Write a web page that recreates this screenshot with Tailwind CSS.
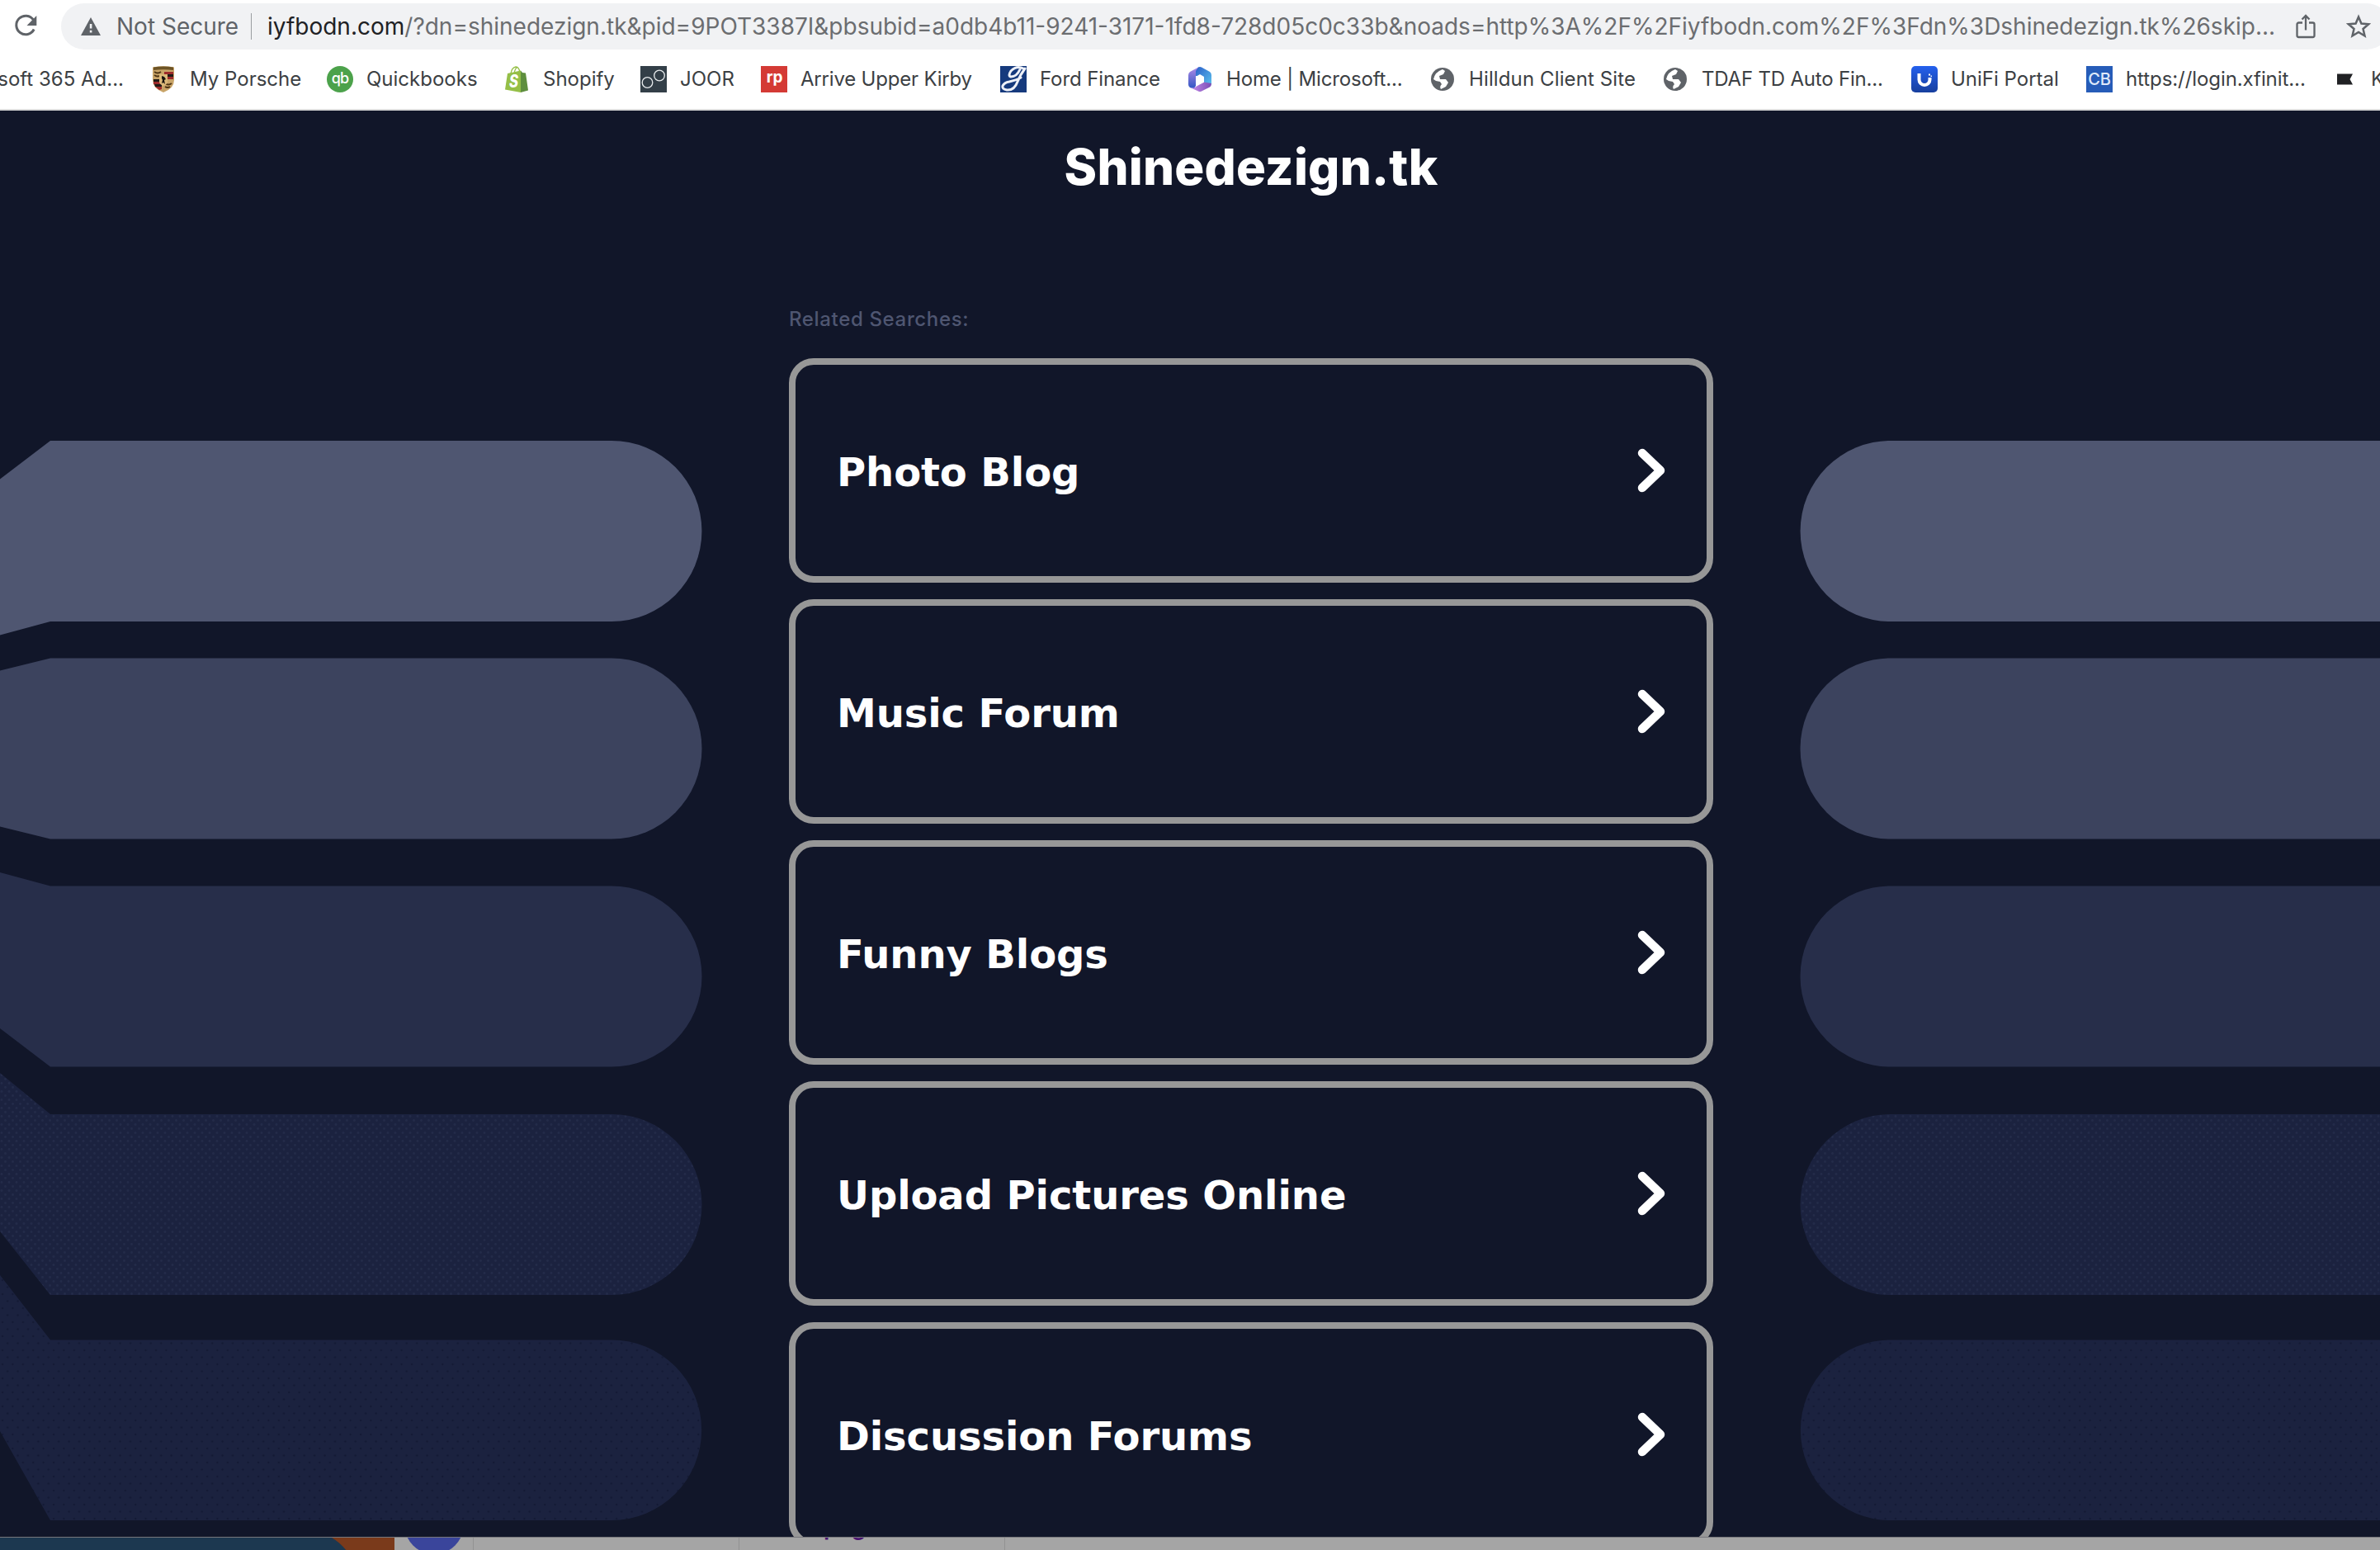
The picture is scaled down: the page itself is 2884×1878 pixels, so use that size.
<!DOCTYPE html>
<html lang="en">
<head>
    <meta charset="UTF-8">
    <meta name="viewport" content="width=device-width, initial-scale=1.0">
    <title>Shinedezign.tk</title>
    <script src="https://cdn.jsdelivr.net/npm/@tailwindcss/browser@4"></script>
</head>
<body class="w-[2884px] h-[1878px] overflow-hidden bg-white font-[Inter,sans-serif]">
    <!-- Address bar -->
    <header class="h-[134px] overflow-hidden border-b-2 border-[#dcdcdc] bg-white">
        <div class="flex items-center pt-1">
            <div class="w-[74px] shrink-0 pl-4">
                <svg class="w-[30px] h-[30px]" viewBox="0 0 30 30" fill="none">
                    <path d="M24.5 7.2A11.3 11.3 0 1 0 25.2 18.5" stroke="#5f6368" stroke-width="3" />
                    <path d="M28.3 2v12H16.5z" fill="#5f6368" />
                </svg>
            </div>
            <div class="flex items-center w-[2822px] h-14 shrink-0 rounded-full bg-[#f1f2f4] text-[28px] text-[#6b6d70] whitespace-nowrap">
                <svg class="ml-6 w-6 h-[22px] shrink-0" viewBox="0 0 24 22">
                    <path d="M12 0l12 22H0z" fill="#5f6368" />
                    <path d="M10.8 8h2.6v5.6h-2.6zM10.8 15.8h2.6v2.8h-2.6z" fill="#f1f2f4" />
                </svg>
                <span class="ml-[19px] w-[163px] text-[#5f6368]">Not Secure</span>
                <span class="w-px h-8 bg-[#9a9da1]"></span>
                <span class="ml-[19px] text-[#202124]">iyfbodn.com</span><span class="w-[2298px]">/?dn=shinedezign.tk&amp;pid=9POT3387I&amp;pbsubid=a0db4b11-9241-3171-1fd8-728d05c0c33b&amp;noads=http%3A%2F%2Fiyfbodn.com%2F%3Fdn%3Dshinedezign.tk%26skip...</span>
                <svg class="-ml-[6px] w-6 h-[30px] shrink-0" viewBox="0 0 24 30" fill="none" stroke="#5f6368" stroke-width="2.3">
                    <path d="M8 10.5H3.5A2 2 0 0 0 1.5 12.500v13.500a2 2 0 0 0 2 2h17a2 2 0 0 0 2-2V12.500a2 2 0 0 0-2-2H16M12 19.500V2.500M7.500 6.500L12 2l4.500 4.500" />
                </svg>
                <svg class="ml-[37px] w-[30px] h-[30px] shrink-0" viewBox="0 0 30 30" fill="none" stroke="#5f6368" stroke-width="2.5">
                    <path d="M15 3.500l3.400 8 8.700.8-6.600 5.700 2 8.500L15 22l-7.500 4.500 2-8.500-6.600-5.700 8.700-.8z" />
                </svg>
            </div>
        </div>

        <!-- Bookmarks -->
        <nav class="flex items-center h-[70px] mt-px text-2xl text-[#3c4043] whitespace-nowrap">
            <a class="flex w-[182px] shrink-0 justify-end pr-[32px]">soft 365 Ad...</a>
            <a class="flex items-center gap-4 w-[214px] shrink-0">
                <svg class="w-8 h-8 shrink-0" viewBox="0 0 32 32">
                    <path d="M3 1.500Q16-1 29 1.500V17q0 10-13 15Q3 27 3 17z" fill="#c9a468" />
                    <path d="M4 1.600Q16-.5 28 1.600V5Q16 3.500 4 5z" fill="#6d5426" />
                    <path d="M17 7h11v3H17zM17 13h11v3H17zM4 19h10v3H4zM6 25h8v3l-3 1z" fill="#9c2a2b" />
                    <path d="M17 10h11v3H17zM4 16h10v3H4zM5 22h9v3H6z" fill="#1f1a17" />
                    <path d="M5 7q4 3 8 0M5 11q4 3 8 0M18 21q4 3 8 0M18 25q3 2 6 0" stroke="#4d3414" stroke-width="2" fill="none" />
                    <path d="M11 10h10v9q0 3-5 5-5-2-5-5z" fill="#dcb97a" />
                    <path d="M14 12l3 1 2 3-2 1 1 5-2-2-2 1 1-4-1-2z" fill="#15110d" />
                </svg>
                My Porsche
            </a>
            <a class="flex items-center gap-4 w-[214px] shrink-0">
                <svg class="w-8 h-8 shrink-0" viewBox="0 0 32 32">
                    <circle cx="16" cy="16" r="16" fill="#4ca24b" />
                    <text x="16" y="20.500" text-anchor="middle" font-family="Inter" font-size="18" font-weight="500" letter-spacing="-1" fill="#fff">qb</text>
                </svg>
                Quickbooks
            </a>
            <a class="flex items-center gap-4 w-[166px] shrink-0">
                <svg class="w-8 h-8 shrink-0" viewBox="0 0 32 32">
                    <path d="M9 9Q10 2 15 1q4 0 5 7M13 9q1-6 4-8" stroke="#95bf47" stroke-width="1.300" fill="none" />
                    <path d="M5 9l16-3.500V32L2 28.500z" fill="#95bf47" />
                    <path d="M21 5.500l2 2.500 4 .5 3 21L21 32z" fill="#5e8e3e" />
                    <text x="7" y="25.500" font-family="Inter" font-size="21" font-weight="800" font-style="italic" textLength="11" lengthAdjust="spacingAndGlyphs" fill="#fff">S</text>
                </svg>
                Shopify
            </a>
            <a class="flex items-center gap-4 w-[146px] shrink-0">
                <svg class="w-8 h-8 shrink-0" viewBox="0 0 32 32" fill="none" stroke="#e8ecee" stroke-width="1.300">
                    <path d="M0 0h32v32H0z" fill="#333f48" stroke="none" />
                    <circle cx="8.500" cy="20" r="6.300" />
                    <circle cx="23" cy="11.500" r="6.300" />
                </svg>
                JOOR
            </a>
            <a class="flex items-center gap-4 w-[290px] shrink-0 tracking-[-0.2px]">
                <svg class="w-8 h-8 shrink-0" viewBox="0 0 32 32">
                    <path d="M0 0h32v32H0z" fill="#d43a35" />
                    <text x="16.500" y="20" text-anchor="middle" font-family="Inter" font-size="19" font-weight="700" fill="#fff">rp</text>
                </svg>
                Arrive Upper Kirby
            </a>
            <a class="flex items-center gap-4 w-[226px] shrink-0 tracking-[-0.1px]">
                <svg class="w-8 h-8 shrink-0" viewBox="0 0 32 32" fill="none" stroke="#eef1f8" stroke-linecap="round">
                    <path d="M0 0h32v32H0z" fill="#163a7d" stroke="none" />
                    <path d="M28 3Q20-1 13 6q-4 6 0 7 7 0 11-9" stroke-width="3" />
                    <path d="M30 3q-6 8-9 16-4 11-13 10-6-1-5-5 2-4 8-5 9-2 14-5" stroke-width="3" />
                </svg>
                Ford Finance
            </a>
            <a class="flex items-center gap-4 w-[294px] shrink-0 tracking-[-0.17px]">
                <svg class="w-8 h-8 shrink-0" viewBox="0 0 32 32">
                    <defs>
                        <linearGradient id="msTop" x1="0" y1="0" x2="1" y2="1"><stop offset="0" stop-color="#2b5fc9" /><stop offset="1" stop-color="#5cc3ee" /></linearGradient>
                        <linearGradient id="msLeft" x1="0" y1="0" x2="0" y2="1"><stop offset="0" stop-color="#b18be6" /><stop offset="1" stop-color="#3156c4" /></linearGradient>
                        <linearGradient id="msBottom" x1="0" y1="0" x2="1" y2="0"><stop offset="0" stop-color="#c58bea" /><stop offset="1" stop-color="#7a4db5" /></linearGradient>
                    </defs>
                    <path d="M15 1L4 7Q2 8.500 2 11v11q0 3 3 4.500l4 .5 2-3V12z" fill="url(#msLeft)" />
                    <path d="M14 1.500q2-1 4 0L28 7q2 1.500 2 4v10q0 2-2 3l-7-4v-6L11 12V6z" fill="url(#msTop)" />
                    <path d="M30 21q0 3-2 4.500L18 30.500q-2 1-4 0L5 26.500q4 1 7-2l9-5z" fill="url(#msBottom)" />
                    <path d="M16 10l5 3v6.500L16 22l-5-2.500V13z" fill="#fff" />
                </svg>
                Home | Microsoft...
            </a>
            <a class="flex items-center gap-4 w-[282px] shrink-0 tracking-[0.12px]">
                <svg class="w-8 h-8 shrink-0" viewBox="0 0 32 32">
                    <circle cx="16" cy="16" r="14" fill="#5f6368" />
                    <path d="M5 16q2-9 11-12l3 2-2 4-5 2 1 4h7l3 4-3 5-6 3q-2-3 1-6l-2-3-5-1z" fill="#fff" />
                    <path d="M19 6l5 2 4 8-3 2-5-3 2-4z" fill="#5f6368" />
                </svg>
                Hilldun Client Site
            </a>
            <a class="flex items-center gap-4 w-[302px] shrink-0 tracking-[-0.2px]">
                <svg class="w-8 h-8 shrink-0" viewBox="0 0 32 32">
                    <circle cx="16" cy="16" r="14" fill="#5f6368" />
                    <path d="M5 16q2-9 11-12l3 2-2 4-5 2 1 4h7l3 4-3 5-6 3q-2-3 1-6l-2-3-5-1z" fill="#fff" />
                    <path d="M19 6l5 2 4 8-3 2-5-3 2-4z" fill="#5f6368" />
                </svg>
                TDAF TD Auto Fin...
            </a>
            <a class="flex items-center gap-4 w-[212px] shrink-0">
                <svg class="w-8 h-8 shrink-0" viewBox="0 0 32 32">
                    <defs><linearGradient id="unifi" x1="0" y1="0" x2="0" y2="1"><stop offset="0" stop-color="#2460ee" /><stop offset="1" stop-color="#173f9e" /></linearGradient></defs>
                    <rect width="32" height="32" rx="5" fill="url(#unifi)" />
                    <path d="M9.500 9v7.500a6.500 6.500 0 0 0 13 0V14" stroke="#fff" stroke-width="4" fill="none" />
                    <path d="M21 9.500h2v2h-2zM23.500 11.500h1.500v1.500h-1.500z" fill="#fff" />
                </svg>
                UniFi Portal
            </a>
            <a class="flex items-center gap-4 w-[296px] shrink-0 tracking-[-0.08px]">
                <svg class="w-8 h-8 shrink-0" viewBox="0 0 32 32">
                    <path d="M0 0h32v32H0z" fill="#265cb8" />
                    <text x="16" y="23" text-anchor="middle" font-family="Inter" font-size="20" font-weight="500" fill="#dfe9fa">CB</text>
                </svg>
                https://login.xfinit...
            </a>
            <a class="flex items-center gap-[17px] shrink-0">
                <svg class="w-8 h-8 shrink-0" viewBox="0 0 32 32">
                    <path d="M8 9.500h19L23.500 16l3.500 6.500H8z" fill="#202124" />
                </svg>
                K
            </a>
        </nav>
    </header>

    <!-- Parked page -->
    <main class="relative h-[1728px] overflow-hidden bg-[#111629]">
        <svg class="absolute inset-0 w-[2884px] h-[1728px]" viewBox="0 134 2884 1728">
            <defs>
                <pattern id="fine" width="9" height="10" patternUnits="userSpaceOnUse">
                    <rect width="9" height="10" fill="#1b223f" />
                    <circle cx="2" cy="2.500" r="1.400" fill="#232b49" />
                    <circle cx="6.500" cy="7.500" r="1.400" fill="#232b49" />
                </pattern>
                <pattern id="coarse" width="12.400" height="17" patternUnits="userSpaceOnUse">
                    <rect width="12.400" height="17" fill="#1b223f" />
                    <circle cx="3" cy="4" r="1.300" fill="#141a35" />
                    <circle cx="9.200" cy="12.500" r="1.300" fill="#141a35" />
                </pattern>
            </defs>
            <path d="M0 580.500L61 534H741a109.500 109.500 0 0 1 0 219H61L0 769.500z" fill="#4f5671" />
            <path d="M0 812.500L61 797.500H741a109.500 109.500 0 0 1 0 219H61L0 1001.500z" fill="#3c435e" />
            <path d="M0 1057L61 1073.500H741a109.500 109.500 0 0 1 0 219H61L0 1246z" fill="#272e4a" />
            <path d="M0 1300L61 1350H741a109.500 109.500 0 0 1 0 219H61L0 1492z" fill="url(#fine)" />
            <path d="M0 1545L61 1623.500H741a109.250 109.250 0 0 1 0 218.500H61L0 1734z" fill="url(#coarse)" />
            <path d="M2884 534H2291a109.500 109.500 0 0 0 0 219H2884z" fill="#4f5671" />
            <path d="M2884 797.500H2291a109.500 109.500 0 0 0 0 219H2884z" fill="#3c435e" />
            <path d="M2884 1073.500H2291a109.500 109.500 0 0 0 0 219H2884z" fill="#272e4a" />
            <path d="M2884 1350H2291a109.500 109.500 0 0 0 0 219H2884z" fill="url(#fine)" />
            <path d="M2884 1623.500H2291a109.250 109.250 0 0 0 0 218.500H2884z" fill="url(#coarse)" />
        </svg>

        <div class="relative w-[1120px] ml-[956px] pt-[38px]">
            <h1 class="text-center text-[60px] leading-[60px] font-extrabold tracking-[0.2px] text-white">Shinedezign.tk</h1>
            <p class="mt-[139px] text-[24px] leading-8 font-medium tracking-[0.65px] text-[#4f5671]">Related Searches:</p>
            <div id="searches" class="mt-[31px] flex flex-col gap-5"></div>
        </div>
    </main>

    <!-- Window behind the browser -->
    <footer class="flex h-4 overflow-hidden border-t border-[#77777c] bg-[#a5a5a5]">
        <svg class="w-[478px] h-4 shrink-0" viewBox="0 0 478 16">
            <path d="M0 0h478v16H0z" fill="#7a3a1b" />
            <path d="M0 0h402q10 6 18 16H0z" fill="#1c3850" />
        </svg>
        <div class="flex w-[96px] shrink-0 justify-center border-r border-[#929292]">
            <svg class="w-[66px] h-4" viewBox="0 0 66 16">
                <circle cx="33" cy="-16" r="36" fill="#3a459b" />
            </svg>
        </div>
        <div class="w-[322px] shrink-0 border-r border-[#929292]"></div>
        <div class="w-[322px] shrink-0 border-r border-[#929292] pl-[102px]">
            <p class="-mt-[27px] text-[28px] leading-7 font-semibold text-[#4a1470]">page</p>
        </div>
    </footer>

    <script>
        const searches = ['Photo Blog', 'Music Forum', 'Funny Blogs', 'Upload Pictures Online', 'Discussion Forums'];

        document.getElementById('searches').innerHTML = searches.map(name => `
            <a class="flex items-center justify-between h-[272px] shrink-0 rounded-[30px] border-8 border-[#979797] pl-[50px] pr-[50px]">
                <span class="pt-[3px] font-['DejaVu_Sans',sans-serif] text-5xl font-bold tracking-[-0.1px] text-white">${name}</span>
                <svg class="w-[34px] h-[54px]" viewBox="0 0 34 54" fill="none" stroke="#fff" stroke-width="10.5" stroke-linecap="round" stroke-linejoin="round">
                    <path d="M6 6l22 21L6 48" />
                </svg>
            </a>
        `).join('');
    </script>
</body>
</html>
